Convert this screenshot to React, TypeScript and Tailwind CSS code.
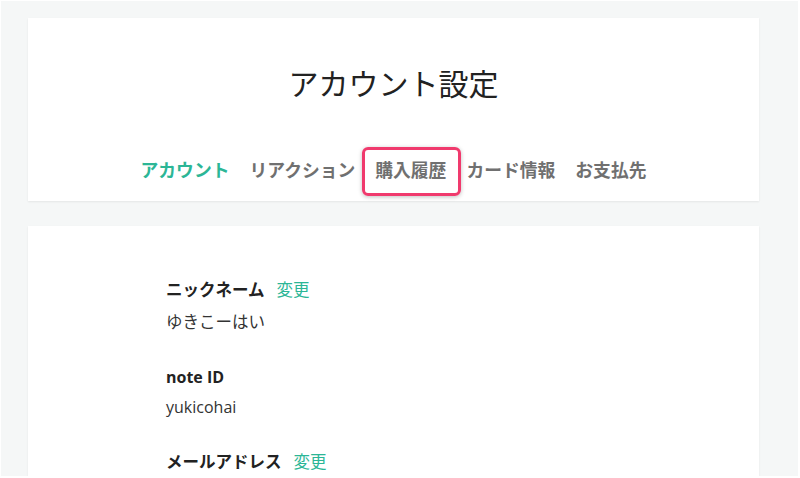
export default function App() {
  const font = { fontFamily: '"Open Sans", "Noto Sans CJK JP", sans-serif' };
  const tabs = ["アカウント", "リアクション", "購入履歴", "カード情報", "お支払先"];
  return (
    <div className="w-[800px] h-[478px] bg-white pt-px pl-px pr-[2px] pb-[2px]" style={font}>
      <div className="h-full bg-[#f5f7f7] overflow-hidden pl-[27px] pr-[39px] pt-[17px]">
        <div className="bg-white h-[183px] shadow-[0_1px_2px_rgba(0,0,0,0.07)] flex flex-col items-center">
          <h1 className="mt-[46px] text-[30px] leading-[40px] font-normal text-[#222]">アカウント設定</h1>
          <nav className="mt-[54px] flex gap-[20px] text-[17.8px] leading-[24px] font-bold text-[#707070]">
            {tabs.map((t, i) => (
              <div key={t} className={"relative " + (i === 0 ? "text-[#2cb696]" : "")}>
                {t}
                {i === 2 && (
                  <div className="absolute left-[-13px] right-[-15px] top-[-11px] bottom-[-14px] border-[3px] border-[#f03a6d] rounded-[6px] shadow-[0_1px_4px_rgba(0,0,0,0.25)]" />
                )}
              </div>
            ))}
          </nav>
        </div>
        <div className="mt-[25px] bg-white h-[260px] shadow-[0_1px_2px_rgba(0,0,0,0.07)] pl-[138px] pt-[52px] text-[16.5px] leading-[24px]">
          <div className="flex gap-[12px]">
            <span className="font-bold text-[#222]">ニックネーム</span>
            <span className="text-[#2cb696]">変更</span>
          </div>
          <div className="mt-[8px] text-[#333]">ゆきこーはい</div>
          <div className="mt-[31px] font-bold text-[#222] text-[16px]">note ID</div>
          <div className="mt-[6px] text-[#333] text-[16px]">yukicohai</div>
          <div className="mt-[31px] flex gap-[12px]">
            <span className="font-bold text-[#222]">メールアドレス</span>
            <span className="text-[#2cb696]">変更</span>
          </div>
        </div>
      </div>
    </div>
  );
}
